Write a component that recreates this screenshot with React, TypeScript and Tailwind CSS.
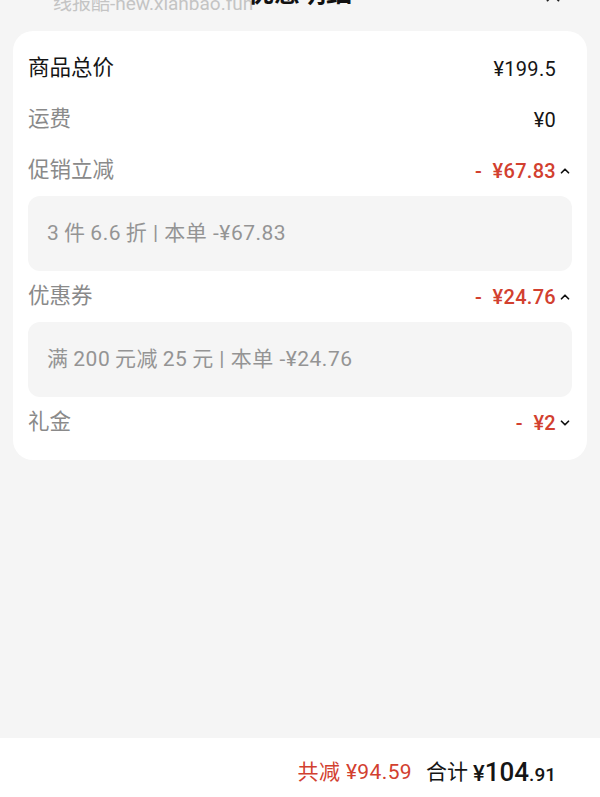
import { ChevronDown, ChevronUp, X } from "lucide-react";

const font = "font-['Roboto','Noto_Sans_CJK_SC',sans-serif]";

type Row = {
  label: string;
  value: string;
  dark?: boolean;
  red?: boolean;
  open?: boolean;
  detail?: string;
};

// thin spaces imitate the phone's gap between CJK and digits
const rows: Row[] = [
  { label: "商品总价", value: "¥199.5", dark: true },
  { label: "运费", value: "¥0" },
  { label: "促销立减", value: "-\u2002¥67.83", red: true, open: true, detail: "3\u2009件\u20096.6\u2009折 | 本单 -¥67.83" },
  { label: "优惠券", value: "-\u2002¥24.76", red: true, open: true, detail: "满\u2009200\u2009元减\u200925\u2009元 | 本单 -¥24.76" },
  { label: "礼金", value: "-\u2002¥2", red: true, open: false },
];

function PriceRow({ row }: { row: Row }) {
  return (
    <>
      <div className="flex h-[51px] items-center justify-between">
        <span className={`text-[21.5px] ${row.dark ? "text-[#151515]" : "text-[#8a8a8a]"}`}>{row.label}</span>
        <div className="flex items-center">
          <span
            className={`text-[20px] tracking-[0.3px] ${row.red ? "font-medium text-[#d2402f]" : "text-[#151515]"}`}
          >
            {row.value}
          </span>
          <span className="flex w-[16px] justify-end">
            {row.red &&
              (row.open ? (
                <ChevronUp className="h-[14px] w-[14px] text-[#111]" strokeWidth={3} />
              ) : (
                <ChevronDown className="h-[14px] w-[14px] text-[#111]" strokeWidth={3} />
              ))}
          </span>
        </div>
      </div>
      {row.detail && (
        <div className="flex h-[75px] items-center rounded-[12px] bg-[#f5f5f5] px-[19px]">
          <span className="text-[21px] tracking-[0.5px] text-[#949494]">{row.detail}</span>
        </div>
      )}
    </>
  );
}

export default function App() {
  return (
    <div className={`flex min-h-[797px] flex-col bg-[#f5f5f5] ${font}`}>
      <div className="relative h-[31px] overflow-hidden">
        <span className="absolute left-[53px] top-[-10px] text-[19px] text-[#c4c4c4]">线报酷-new.xianbao.fun</span>
        <div className="relative -mt-[23px] flex h-[32px] items-center justify-center">
          <span className="text-[26px] font-bold text-[#111]">优惠明细</span>
        </div>
        <X className="absolute right-[36px] top-[-16px] h-[22px] w-[22px] text-[#222]" strokeWidth={2} />
      </div>

      <div className="mx-[13px] rounded-[20px] bg-white px-[15px] pb-[12px] pt-[12px]">
        {rows.map((row) => (
          <PriceRow key={row.label} row={row} />
        ))}
      </div>

      <div className="flex-1" />

      <div className="flex h-[59px] items-center justify-end bg-white pr-[44px] pt-[10px]">
        <span className="text-[21px] tracking-[0.4px] text-[#d2402f]">共减 ¥94.59</span>
        <span className="ml-[14px] text-[21px] text-[#151515]">合计</span>
        <span className="ml-[5px] flex items-baseline text-[#151515]">
          <span className="text-[22px] font-medium">¥</span>
          <span className="text-[26px] font-medium">104</span>
          <span className="text-[19px] font-medium">.91</span>
        </span>
      </div>
    </div>
  );
}
